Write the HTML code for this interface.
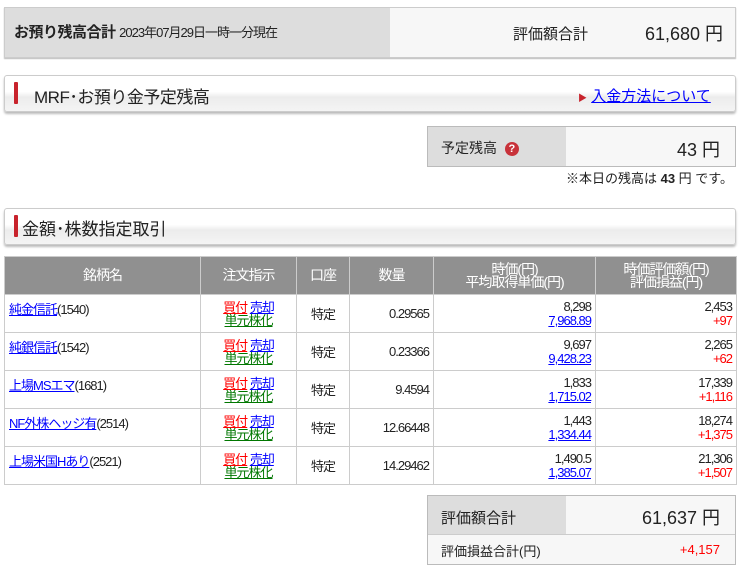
<!DOCTYPE html>
<html><head><meta charset="utf-8"><style>
body{margin:0;width:740px;height:571px;background:#fff;font-family:"Liberation Sans","Noto Sans CJK JP",sans-serif;color:#222;position:relative;overflow:hidden}
.a{position:absolute;box-sizing:border-box}
.hdr{border:1px solid #ccc;border-radius:3px;background:linear-gradient(#fff 0,#fff 45%,#ececec 60%,#f4f4f4 100%);box-shadow:0 2px 2px #bbb}
.bar{position:absolute;left:9px;width:4px;background:#c8232c;border-radius:1px}
table{border-collapse:collapse;position:absolute;left:4px;top:256px;width:732px;table-layout:fixed;font-size:13px;letter-spacing:-1px}
th{background:#909090;color:#fff;font-weight:normal;border:1px solid #ccc;height:37px;line-height:13px;font-size:14px;padding:0}
td{border:1px solid #ccc;height:38px;padding:0 4px;box-sizing:border-box;white-space:nowrap;overflow:hidden}
a{color:#00f;text-decoration:underline}
.r{text-align:right}.red{color:#f00}.g{color:#070}
</style></head><body>
<div class="a" style="left:4px;top:7px;width:732px;height:51px;border:1px solid #ccc;background:#f7f7f7;box-shadow:0 1px 1px #bbb"></div>
<div class="a" style="left:5px;top:8px;width:385px;height:49px;background:#ddd"></div>
<div class="a" style="left:14px;top:21px;font-size:15px;font-weight:bold;letter-spacing:-0.5px">お預り残高合計 <span style="font-size:13px;font-weight:normal;letter-spacing:-1px">2023年07月29日一時一分現在</span></div>
<div class="a" style="left:513px;top:23px;font-size:15px">評価額合計</div>
<div class="a" style="left:600px;top:20px;width:123px;text-align:right;font-size:18px">61,680 円</div>

<div class="a hdr" style="left:4px;top:75px;width:732px;height:37px"><div class="bar" style="top:6px;height:22px"></div></div>
<div class="a" style="left:34px;top:83px;font-size:17px;letter-spacing:-0.5px">MRF･お預り金予定残高</div>
<div class="a" style="left:578px;top:85px;font-size:15px"><span style="color:#c8232c;font-size:9px">▶</span> <a>入金方法について</a></div>

<div class="a" style="left:427px;top:126px;width:309px;height:41px;border:1px solid #bbb;background:#f7f7f7"></div>
<div class="a" style="left:428px;top:127px;width:138px;height:39px;background:#ddd"></div>
<div class="a" style="left:441px;top:138px;font-size:14px">予定残高 <span style="display:inline-block;width:14px;height:14px;border-radius:50%;background:#c8323a;color:#fff;font-size:11px;font-weight:bold;text-align:center;line-height:14px;vertical-align:1px;margin-left:4px">?</span></div>
<div class="a" style="left:600px;top:136px;width:120px;text-align:right;font-size:18px">43 円</div>
<div class="a" style="left:530px;top:168px;width:203px;text-align:right;font-size:13px">※本日の残高は <b>43</b> 円 です。</div>

<div class="a hdr" style="left:4px;top:208px;width:732px;height:37px"><div class="bar" style="top:6px;height:22px"></div></div>
<div class="a" style="left:22px;top:215px;font-size:17px">金額･株数指定取引</div>

<table>
<colgroup><col style="width:196px"><col style="width:96px"><col style="width:53px"><col style="width:84px"><col style="width:162px"><col style="width:141px"></colgroup>
<tr><th>銘柄名</th><th>注文指示</th><th>口座</th><th>数量</th><th>時価(円)<br>平均取得単価(円)</th><th>時価評価額(円)<br>評価損益(円)</th></tr>
<tr><td style="vertical-align:top;padding-top:4px"><a>純金信託</a>(1540)</td><td style="text-align:center;line-height:13px"><a class="red">買付</a> <a>売却</a><br><a class="g">単元株化</a></td><td style="text-align:center">特定</td><td class="r">0.29565</td><td class="r" style="line-height:14px">8,298<br><a>7,968.89</a></td><td class="r" style="line-height:14px">2,453<br><span class="red">+97</span></td></tr>
<tr><td style="vertical-align:top;padding-top:4px"><a>純銀信託</a>(1542)</td><td style="text-align:center;line-height:13px"><a class="red">買付</a> <a>売却</a><br><a class="g">単元株化</a></td><td style="text-align:center">特定</td><td class="r">0.23366</td><td class="r" style="line-height:14px">9,697<br><a>9,428.23</a></td><td class="r" style="line-height:14px">2,265<br><span class="red">+62</span></td></tr>
<tr><td style="vertical-align:top;padding-top:4px"><a>上場MSエマ</a>(1681)</td><td style="text-align:center;line-height:13px"><a class="red">買付</a> <a>売却</a><br><a class="g">単元株化</a></td><td style="text-align:center">特定</td><td class="r">9.4594</td><td class="r" style="line-height:14px">1,833<br><a>1,715.02</a></td><td class="r" style="line-height:14px">17,339<br><span class="red">+1,116</span></td></tr>
<tr><td style="vertical-align:top;padding-top:4px"><a>NF外株ヘッジ有</a>(2514)</td><td style="text-align:center;line-height:13px"><a class="red">買付</a> <a>売却</a><br><a class="g">単元株化</a></td><td style="text-align:center">特定</td><td class="r">12.66448</td><td class="r" style="line-height:14px">1,443<br><a>1,334.44</a></td><td class="r" style="line-height:14px">18,274<br><span class="red">+1,375</span></td></tr>
<tr><td style="vertical-align:top;padding-top:4px"><a>上場米国Hあり</a>(2521)</td><td style="text-align:center;line-height:13px"><a class="red">買付</a> <a>売却</a><br><a class="g">単元株化</a></td><td style="text-align:center">特定</td><td class="r">14.29462</td><td class="r" style="line-height:14px">1,490.5<br><a>1,385.07</a></td><td class="r" style="line-height:14px">21,306<br><span class="red">+1,507</span></td></tr>
</table>

<div class="a" style="left:427px;top:495px;width:309px;height:70px;border:1px solid #bbb;background:#f7f7f7"></div>
<div class="a" style="left:428px;top:496px;width:138px;height:38px;background:#ddd"></div>
<div class="a" style="left:428px;top:534px;width:307px;height:1px;background:#ccc"></div>
<div class="a" style="left:441px;top:507px;font-size:15px">評価額合計</div>
<div class="a" style="left:600px;top:504px;width:120px;text-align:right;font-size:18px">61,637 円</div>
<div class="a" style="left:441px;top:541px;font-size:13px">評価損益合計(円)</div>
<div class="a red" style="left:600px;top:542px;width:120px;text-align:right;font-size:13px">+4,157</div>
</body></html>
